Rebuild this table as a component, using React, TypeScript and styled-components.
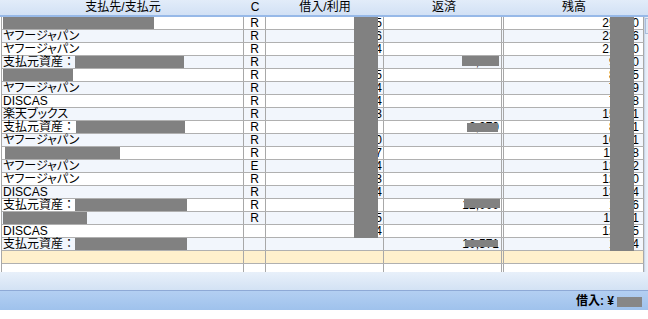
import React from "react";
import styled, { createGlobalStyle } from "styled-components";

const Global = createGlobalStyle`
  html, body { margin: 0; padding: 0; background: #fff; }
  body {
    font-family: "Liberation Sans", "Noto Sans CJK JP", sans-serif;
    font-size: 12px;
    color: #000;
    font-feature-settings: "palt";
  }
`;

const COLS = "242px 22px 118px 120px 140px";

const Page = styled.div`
  width: 648px;
  height: 319px;
  display: flex;
  flex-direction: column;
  overflow: hidden;
  background: #fff;
`;

const GridArea = styled.div`
  height: 272px;
  display: flex;
  flex-direction: column;
  overflow: hidden;
  background: #fff;
`;

const Header = styled.div`
  display: grid;
  grid-template-columns: ${COLS} 4px;
  padding-left: 2px;
  height: 15px;
  border-bottom: 2px solid #97b9e8;
  background: linear-gradient(#e2ecf9, #d2e1f5);
`;

const HeadCell = styled.div`
  text-align: center;
  line-height: 15px;
  white-space: nowrap;
`;

const Body = styled.div`
  flex: 1;
  display: flex;
  min-height: 0;
`;

const Rows = styled.div`
  margin-left: 1px;
  border-left: 1px solid #a8a8a8;
  display: flex;
  flex-direction: column;
`;

type Tone = "plain" | "alt" | "sel";

const Row = styled.div<{ $tone: Tone }>`
  display: grid;
  grid-template-columns: ${COLS};
  height: 12px;
  flex: none;
  border-bottom: 1px solid #b0b0b0;
  background: ${(p) =>
    p.$tone === "sel" ? "#fff0cc" : p.$tone === "alt" ? "#f2f6fc" : "#ffffff"};
`;

const Cell = styled.div<{ $align?: "left" | "center" | "right"; $pr?: number; $double?: boolean }>`
  position: relative;
  display: flex;
  align-items: center;
  justify-content: ${(p) =>
    p.$align === "right" ? "flex-end" : p.$align === "center" ? "center" : "flex-start"};
  padding: 0 ${(p) => p.$pr ?? 1}px 0 1px;
  line-height: 12px;
  white-space: nowrap;
  border-right: ${(p) => (p.$double ? "3px double #a8a8a8" : "1px solid #a8a8a8")};
  box-sizing: border-box;
`;

const Prefix = styled.span`
  font-feature-settings: normal;
`;

const NameBlot = styled.span<{ $w: number; $ml?: number }>`
  display: inline-block;
  width: ${(p) => p.$w}px;
  height: 12px;
  margin-left: ${(p) => p.$ml ?? 0}px;
  background: #818181;
`;

const Blot = styled.span<{ $left: number; $w: number; $top?: number; $h?: number }>`
  position: absolute;
  left: ${(p) => p.$left}px;
  width: ${(p) => p.$w}px;
  top: ${(p) => p.$top ?? 0}px;
  height: ${(p) => (p.$h !== undefined ? `${p.$h}px` : "13px")};
  background: #818181;
`;

const ScrollStrip = styled.div`
  width: 4px;
  flex: none;
  background: linear-gradient(90deg, #dfe8f5, #eef3fa);
  border-left: 1px solid #c9d6e8;
  box-sizing: border-box;
  position: relative;
`;

const Thumb = styled.div`
  margin-top: 1px;
  height: 14px;
  border: 1px solid #a9bedc;
  border-right: none;
  background: #dde7f5;
`;

const Footer = styled.div`
  height: 18px;
  background: linear-gradient(#e8f0fa, #d3e2f4);
  border-bottom: 1px solid #8ea9d6;
`;

const StatusBar = styled.div`
  height: 19px;
  background: linear-gradient(#b3cff2, #9fc2ec);
  display: flex;
  align-items: center;
  justify-content: flex-end;
  padding-right: 6px;
  gap: 3px;
`;

const StatusLabel = styled.span`
  font-weight: bold;
  font-size: 12px;
  line-height: 14px;
`;

const StatusBlot = styled.span`
  display: inline-block;
  width: 25px;
  height: 10px;
  background: #878787;
  margin-top: 2px;
`;

type Name = { text?: string; prefix?: string; blot?: number; ml?: number };
type PayBlot = { left: number; w: number; top: number; h: number };
type Data = {
  name: Name;
  c: string;
  borrow: string;
  pay: string;
  payBlot?: PayBlot;
  bal: string;
  borrowStrip: boolean;
  balStrip: boolean;
};

const P = "支払元資産：";
const Y = "ヤフージャパン";

const data: Data[] = [
  { name: { blot: 151 }, c: "R", borrow: "445", pay: "", bal: "25,340", borrowStrip: true, balStrip: true },
  { name: { text: Y }, c: "R", borrow: "116", pay: "", bal: "23,896", borrowStrip: true, balStrip: true },
  { name: { text: Y }, c: "R", borrow: "034", pay: "", bal: "21,860", borrowStrip: true, balStrip: true },
  { name: { prefix: P, blot: 109, ml: 0 }, c: "R", borrow: "", pay: "5,000", payBlot: { left: 78, w: 37, top: 0, h: 10 }, bal: "9,870", borrowStrip: true, balStrip: true },
  { name: { blot: 70 }, c: "R", borrow: "355", pay: "", bal: "8,515", borrowStrip: true, balStrip: true },
  { name: { text: Y }, c: "R", borrow: "604", pay: "", bal: "7,909", borrowStrip: true, balStrip: true },
  { name: { text: "DISCAS" }, c: "R", borrow: "324", pay: "", bal: "7,598", borrowStrip: true, balStrip: true },
  { name: { text: "楽天ブックス" }, c: "R", borrow: "943", pay: "", bal: "15,641", borrowStrip: true, balStrip: true },
  { name: { prefix: P, blot: 109, ml: 1 }, c: "R", borrow: "", pay: "2,270", payBlot: { left: 83, w: 31, top: 2, h: 9 }, bal: "8,371", borrowStrip: true, balStrip: true },
  { name: { text: Y }, c: "R", borrow: "450", pay: "", bal: "10,821", borrowStrip: true, balStrip: true },
  { name: { blot: 115, ml: 2 }, c: "R", borrow: "597", pay: "", bal: "11,418", borrowStrip: true, balStrip: true },
  { name: { text: Y }, c: "E", borrow: "604", pay: "", bal: "12,022", borrowStrip: true, balStrip: true },
  { name: { text: Y }, c: "R", borrow: "913", pay: "", bal: "12,930", borrowStrip: true, balStrip: true },
  { name: { text: "DISCAS" }, c: "R", borrow: "334", pay: "", bal: "13,264", borrowStrip: true, balStrip: true },
  { name: { prefix: P, blot: 112 }, c: "R", borrow: "", pay: "12,000", payBlot: { left: 80, w: 36, top: 0, h: 9 }, bal: "1,266", borrowStrip: true, balStrip: true },
  { name: { blot: 84 }, c: "R", borrow: "435", pay: "", bal: "11,701", borrowStrip: true, balStrip: true },
  { name: { text: "DISCAS" }, c: "", borrow: "324", pay: "", bal: "12,025", borrowStrip: true, balStrip: true },
  { name: { prefix: P, blot: 112 }, c: "", borrow: "", pay: "10,571", payBlot: { left: 81, w: 33, top: 2, h: 7 }, bal: "1,454", borrowStrip: false, balStrip: true },
];

const NameContent: React.FC<{ n: Name }> = ({ n }) => (
  <>
    {n.text}
    {n.prefix && <Prefix>{n.prefix}</Prefix>}
    {n.blot !== undefined && <NameBlot $w={n.blot} $ml={n.ml} />}
  </>
);

export default function App() {
  return (
    <Page>
      <Global />
      <GridArea>
        <Header>
          <HeadCell>支払先/支払元</HeadCell>
          <HeadCell>C</HeadCell>
          <HeadCell>借入/利用</HeadCell>
          <HeadCell>返済</HeadCell>
          <HeadCell>残高</HeadCell>
          <div />
        </Header>
        <Body>
          <Rows>
            {data.map((r, i) => (
              <Row key={i} $tone={i % 2 === 1 ? "alt" : "plain"}>
                <Cell>
                  <NameContent n={r.name} />
                </Cell>
                <Cell $align="center">{r.c}</Cell>
                <Cell $align="right" $pr={1}>
                  {r.borrow}
                  {r.borrowStrip && <Blot $left={88} $w={24} />}
                </Cell>
                <Cell $align="right" $pr={2} $double>
                  {r.pay}
                  {r.payBlot && (
                    <Blot $left={r.payBlot.left} $w={r.payBlot.w} $top={r.payBlot.top} $h={r.payBlot.h} />
                  )}
                </Cell>
                <Cell $align="right" $pr={4}>
                  {r.bal}
                  {r.balStrip && <Blot $left={106} $w={24} />}
                </Cell>
              </Row>
            ))}
            <Row $tone="sel">
              <Cell />
              <Cell />
              <Cell />
              <Cell $double />
              <Cell />
            </Row>
            <Row $tone="plain">
              <Cell />
              <Cell />
              <Cell />
              <Cell $double />
              <Cell />
            </Row>
          </Rows>
          <ScrollStrip>
            <Thumb />
          </ScrollStrip>
        </Body>
      </GridArea>
      <Footer />
      <StatusBar>
        <StatusLabel>借入: ¥</StatusLabel>
        <StatusBlot />
      </StatusBar>
    </Page>
  );
}
